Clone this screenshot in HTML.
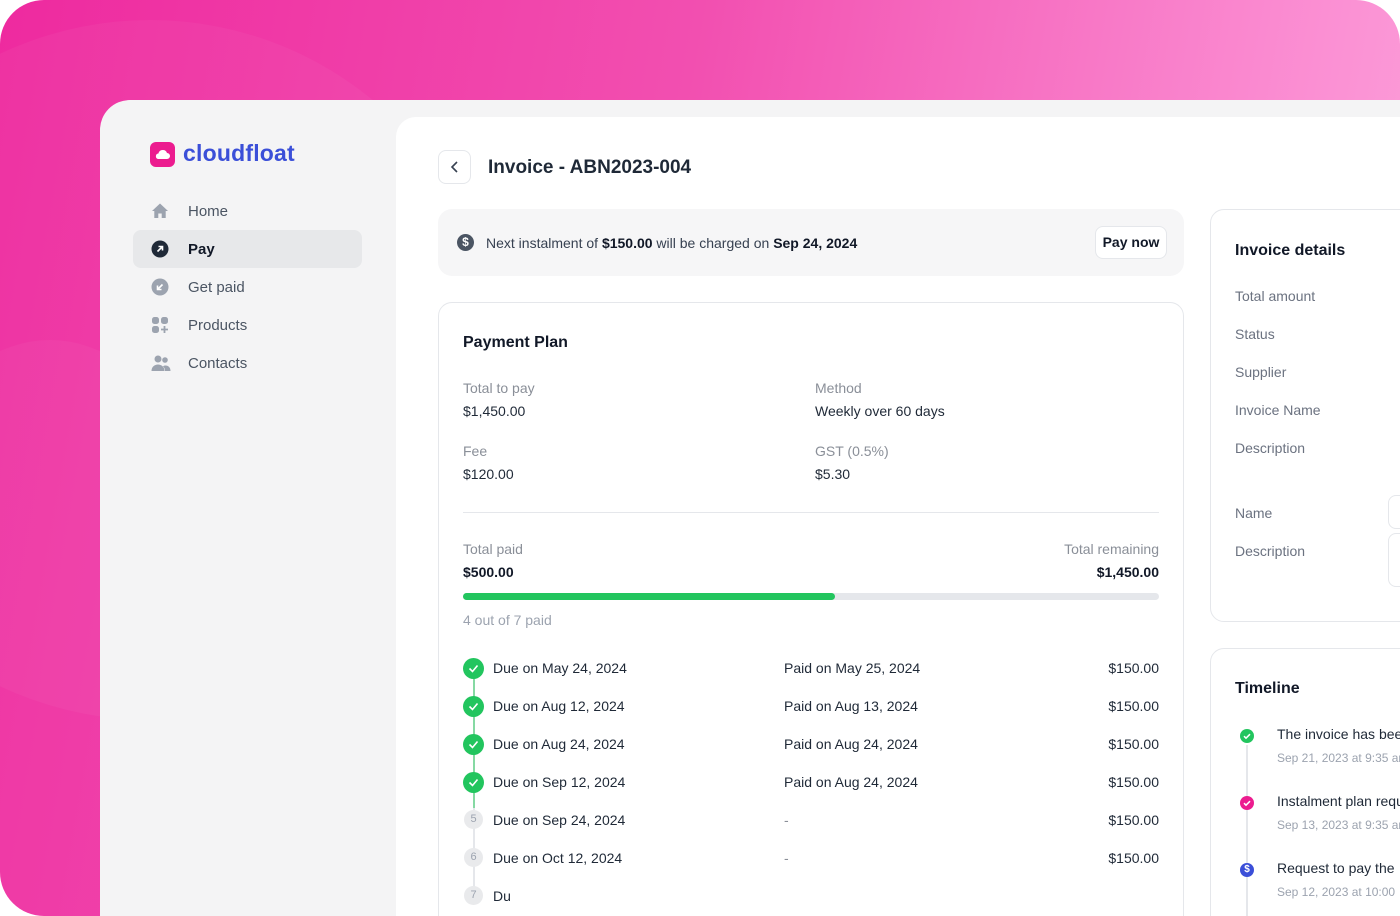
<!DOCTYPE html>
<html style="overflow:hidden;width:1400px;height:916px"><head><meta charset="utf-8"><style>
*{box-sizing:border-box;margin:0;padding:0}
body{width:1400px;height:916px;overflow:hidden;font-family:"Liberation Sans",sans-serif;background:#fff;position:relative}
.bg{position:absolute;left:0;top:0;width:1400px;height:916px;border-radius:44px 44px 0 44px;background:linear-gradient(100deg,#ee2a9f 0%,#f24fb0 45%,#fb8fd3 85%,#fca6dc 100%);overflow:hidden}
.blob{position:absolute;border-radius:50%;background:rgba(255,255,255,0.04)}
.app{position:absolute;left:100px;top:100px;width:1300px;height:816px;background:#f4f4f5;border-radius:30px 0 0 0;overflow:hidden}
.main{position:absolute;left:396px;top:117px;width:1004px;height:799px;background:#fff;border-radius:20px 0 0 0}
.abs{position:absolute}
.nav{position:absolute;left:133px;width:229px;height:38px;border-radius:8px;display:flex;align-items:center;font-size:15px;color:#4b5563}
.nav .ic{position:absolute;left:18px;top:10px}
.nav span{position:absolute;left:55px}
.t{position:absolute;font-size:14px;color:#1f2937;white-space:nowrap}
.g{color:#8a8f98}
.card{position:absolute;border:1px solid #e5e7eb;border-radius:14px;background:#fff}
.chk{position:absolute;left:463px;width:21px;height:21px;border-radius:50%;background:#22c55e}
.num{position:absolute;left:464px;width:19px;height:19px;border-radius:50%;background:#e9eaec;color:#9ca3af;font-size:11px;text-align:center;line-height:19px}
.clip{position:absolute;left:0;top:0;width:1400px;height:916px;overflow:hidden}
</style></head><body><div class="clip">
<div class="bg">
<div class="blob" style="left:-200px;top:20px;width:700px;height:700px"></div>
<div class="blob" style="left:-150px;top:340px;width:400px;height:700px"></div>
</div>
<div class="app"></div>
<div class="main"></div>

<div class="abs" style="left:150px;top:142px;width:25px;height:25px;border-radius:6px;background:#ec1c8f"></div>
<svg class="abs" style="left:153px;top:146px" width="19" height="17" viewBox="0 0 19 17"><path d="M5 13h9a3 3 0 0 0 0-6 4.5 4.5 0 0 0-8.6 0.5A2.8 2.8 0 0 0 5 13z" fill="#fff"/></svg>
<div class="abs" style="left:183px;top:140px;font-size:23px;font-weight:bold;color:#3b4fd8;letter-spacing:0.2px">cloudfloat</div>

<div class="nav" style="top:192px"><svg class="ic" width="18" height="18" viewBox="0 0 18 18"><path d="M9 1.5L1 9h2.3v7h4v-4.5h3.4V16h4V9H17z" fill="#9ca3af"/></svg><span>Home</span></div>
<div class="nav" style="top:230px;background:#e7e8ea;color:#111827;font-weight:bold"><svg class="ic" width="18" height="18" viewBox="0 0 18 18"><circle cx="9" cy="9" r="8.5" fill="#1f2937"/><path d="M6.5 11.5l5-5M7.5 6.5h4v4" stroke="#fff" stroke-width="1.6" fill="none"/></svg><span>Pay</span></div>
<div class="nav" style="top:268px"><svg class="ic" width="18" height="18" viewBox="0 0 18 18"><circle cx="9" cy="9" r="8.5" fill="#9ca3af"/><path d="M11.5 6.5l-5 5M6.5 7.5v4h4" stroke="#fff" stroke-width="1.6" fill="none"/></svg><span>Get paid</span></div>
<div class="nav" style="top:306px"><svg class="ic" width="18" height="18" viewBox="0 0 18 18"><rect x="1" y="1" width="7" height="7" rx="2.5" fill="#9ca3af"/><rect x="10" y="1" width="7" height="7" rx="2.5" fill="#9ca3af"/><rect x="1" y="10" width="7" height="7" rx="2.5" fill="#9ca3af"/><path d="M13.5 10v7M10 13.5h7" stroke="#9ca3af" stroke-width="1.8"/></svg><span>Products</span></div>
<div class="nav" style="top:344px"><svg class="ic" width="20" height="18" viewBox="0 0 20 18"><circle cx="7" cy="5" r="3.5" fill="#9ca3af"/><circle cx="14" cy="6" r="2.8" fill="#9ca3af"/><path d="M0.5 17c0-4 3-6.5 6.5-6.5s6.5 2.5 6.5 6.5zM14 17h5.5c0-3.5-2-5.5-5-5.5-1 0-2 .3-2.6.8 1.5 1.2 2.1 2.8 2.1 4.7z" fill="#9ca3af"/></svg><span>Contacts</span></div>

<div class="abs" style="left:438px;top:150px;width:33px;height:34px;border:1px solid #e5e7eb;border-radius:8px;background:#fff"></div>
<svg class="abs" style="left:449px;top:160px" width="12" height="14" viewBox="0 0 12 14"><path d="M8 2L3 7l5 5" stroke="#374151" stroke-width="1.6" fill="none"/></svg>
<div class="abs" style="left:488px;top:157px;font-size:19px;font-weight:bold;color:#1f2937">Invoice - ABN2023-004</div>

<div class="abs" style="left:438px;top:209px;width:746px;height:67px;border-radius:14px;background:#f6f6f7"></div>
<div class="abs" style="left:457px;top:234px;width:17px;height:17px;border-radius:50%;background:#4b5563;color:#fff;font-size:12px;font-weight:bold;text-align:center;line-height:17px">$</div>
<div class="t" style="left:486px;top:235px;color:#374151">Next instalment of <b style="color:#111827">$150.00</b> will be charged on <b style="color:#111827">Sep 24, 2024</b></div>
<div class="abs" style="left:1095px;top:226px;width:72px;height:33px;border:1px solid #e5e7eb;border-radius:8px;background:#fff;font-size:14px;font-weight:bold;color:#111827;text-align:center;line-height:31px">Pay now</div>

<div class="card" style="left:438px;top:302px;width:746px;height:640px"></div>
<div class="t" style="left:463px;top:334px;font-size:16px;font-weight:bold;color:#111827">Payment Plan</div>
<div class="t g" style="left:463px;top:380px">Total to pay</div>
<div class="t" style="left:463px;top:403px">$1,450.00</div>
<div class="t g" style="left:815px;top:380px">Method</div>
<div class="t" style="left:815px;top:403px">Weekly over 60 days</div>
<div class="t g" style="left:463px;top:443px">Fee</div>
<div class="t" style="left:463px;top:466px">$120.00</div>
<div class="t g" style="left:815px;top:443px">GST (0.5%)</div>
<div class="t" style="left:815px;top:466px">$5.30</div>
<div class="abs" style="left:463px;top:512px;width:696px;height:1px;background:#e5e7eb"></div>
<div class="t g" style="left:463px;top:541px">Total paid</div>
<div class="t" style="left:463px;top:564px;font-weight:bold;color:#111827">$500.00</div>
<div class="t g" style="right:241px;top:541px">Total remaining</div>
<div class="t" style="right:241px;top:564px;font-weight:bold;color:#111827">$1,450.00</div>
<div class="abs" style="left:463px;top:593px;width:696px;height:7px;border-radius:4px;background:#e5e7eb"></div>
<div class="abs" style="left:463px;top:593px;width:372px;height:7px;border-radius:4px;background:#22c55e"></div>
<div class="t" style="left:463px;top:612px;color:#9ca3af">4 out of 7 paid</div>

<div class="abs" style="left:473px;top:678px;width:1.5px;height:210px;background:#e5e7eb"></div>
<div class="abs" style="left:473px;top:678px;width:1.5px;height:130px;background:#86d9a3"></div>

<svg width="0" height="0" style="position:absolute"><defs><path id="ck" d="M6.5 10.5l3 3 5-6" stroke="#fff" stroke-width="1.6" fill="none"/><path id="ck2" d="M4 7.2l2 2 4-4" stroke="#fff" stroke-width="1.5" fill="none"/></defs></svg>
<div class="chk" style="top:658px"><svg width="21" height="21"><use href="#ck"/></svg></div>
<div class="chk" style="top:696px"><svg width="21" height="21"><use href="#ck"/></svg></div>
<div class="chk" style="top:734px"><svg width="21" height="21"><use href="#ck"/></svg></div>
<div class="chk" style="top:772px"><svg width="21" height="21"><use href="#ck"/></svg></div>
<div class="num" style="top:810px">5</div>
<div class="num" style="top:848px">6</div>
<div class="num" style="top:886px">7</div>

<div class="t" style="left:493px;top:660px">Due on May 24, 2024</div><div class="t" style="left:784px;top:660px">Paid on May 25, 2024</div><div class="t" style="right:241px;top:660px">$150.00</div>
<div class="t" style="left:493px;top:698px">Due on Aug 12, 2024</div><div class="t" style="left:784px;top:698px">Paid on Aug 13, 2024</div><div class="t" style="right:241px;top:698px">$150.00</div>
<div class="t" style="left:493px;top:736px">Due on Aug 24, 2024</div><div class="t" style="left:784px;top:736px">Paid on Aug 24, 2024</div><div class="t" style="right:241px;top:736px">$150.00</div>
<div class="t" style="left:493px;top:774px">Due on Sep 12, 2024</div><div class="t" style="left:784px;top:774px">Paid on Aug 24, 2024</div><div class="t" style="right:241px;top:774px">$150.00</div>
<div class="t" style="left:493px;top:812px">Due on Sep 24, 2024</div><div class="t g" style="left:784px;top:812px">-</div><div class="t" style="right:241px;top:812px">$150.00</div>
<div class="t" style="left:493px;top:850px">Due on Oct 12, 2024</div><div class="t g" style="left:784px;top:850px">-</div><div class="t" style="right:241px;top:850px">$150.00</div>
<div class="t" style="left:493px;top:888px">Du</div>

<div class="card" style="left:1210px;top:209px;width:220px;height:413px"></div>
<div class="t" style="left:1235px;top:242px;font-size:16px;font-weight:bold;color:#111827">Invoice details</div>
<div class="t" style="left:1235px;top:288px;color:#6b7280">Total amount</div>
<div class="t" style="left:1235px;top:326px;color:#6b7280">Status</div>
<div class="t" style="left:1235px;top:364px;color:#6b7280">Supplier</div>
<div class="t" style="left:1235px;top:402px;color:#6b7280">Invoice Name</div>
<div class="t" style="left:1235px;top:440px;color:#6b7280">Description</div>
<div class="t" style="left:1235px;top:505px;color:#6b7280">Name</div>
<div class="t" style="left:1235px;top:543px;color:#6b7280">Description</div>
<div class="abs" style="left:1388px;top:495px;width:40px;height:34px;border:1px solid #e5e7eb;border-radius:8px"></div>
<div class="abs" style="left:1388px;top:533px;width:40px;height:54px;border:1px solid #e5e7eb;border-radius:8px"></div>

<div class="card" style="left:1210px;top:648px;width:220px;height:300px"></div>
<div class="t" style="left:1235px;top:680px;font-size:16px;font-weight:bold;color:#111827">Timeline</div>
<div class="abs" style="left:1246px;top:745px;width:1.5px;height:180px;background:#e5e7eb"></div>
<div class="abs" style="left:1240px;top:729px;width:14px;height:14px;border-radius:50%;background:#22c55e"><svg width="14" height="14"><use href="#ck2"/></svg></div>
<div class="abs" style="left:1240px;top:796px;width:14px;height:14px;border-radius:50%;background:#ec1c8f"><svg width="14" height="14"><use href="#ck2"/></svg></div>
<div class="abs" style="left:1240px;top:863px;width:14px;height:14px;border-radius:50%;background:#3b4fd8;color:#fff;font-size:10px;font-weight:bold;text-align:center;line-height:14px">$</div>
<div class="t" style="left:1277px;top:726px;color:#1f2937">The invoice has been</div>
<div class="t" style="left:1277px;top:751px;font-size:12px;color:#9ca3af">Sep 21, 2023 at 9:35 am</div>
<div class="t" style="left:1277px;top:793px;color:#1f2937">Instalment plan requested</div>
<div class="t" style="left:1277px;top:818px;font-size:12px;color:#9ca3af">Sep 13, 2023 at 9:35 am</div>
<div class="t" style="left:1277px;top:860px;color:#1f2937">Request to pay the</div>
<div class="t" style="left:1277px;top:885px;font-size:12px;color:#9ca3af">Sep 12, 2023 at 10:00</div>
</div></body></html>
